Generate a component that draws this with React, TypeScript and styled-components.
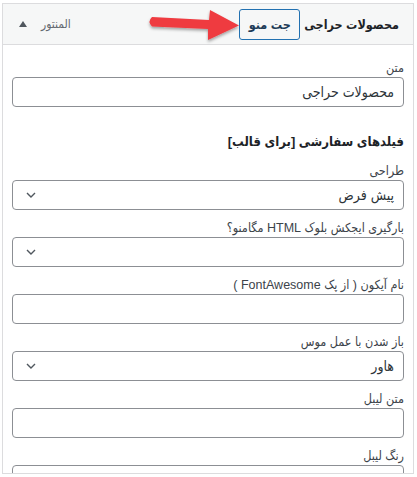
import styled, { createGlobalStyle } from 'styled-components'

const GlobalStyle = createGlobalStyle`
  html, body {
    margin: 0;
    padding: 0;
    background: #fff;
  }
  body {
    font-family: "Liberation Sans", "DejaVu Sans Condensed", "DejaVu Sans", sans-serif;
    color: #1d2327;
  }
`

const Page = styled.div`
  width: 417px;
  height: 477px;
  padding: 3px 3px 0 2px;
  box-sizing: border-box;
  overflow: hidden;
`

const Panel = styled.div`
  direction: rtl;
  border: 1px solid #dcdcde;
  background: #fff;
  height: 469px;
  overflow: hidden;
`

const Header = styled.div`
  position: relative;
  height: 40px;
  display: flex;
  align-items: center;
  justify-content: space-between;
  padding: 0 14px 0 16px;
  background: #f6f7f7;
  border-bottom: 1px solid #dcdcde;
`

const TitleGroup = styled.div`
  display: flex;
  align-items: center;
  gap: 4px;
`

const Title = styled.h2`
  margin: 0;
  font-size: 12.5px;
  font-weight: bold;
  color: #1d2327;
`

const MenuButton = styled.button`
  height: 31px;
  width: 61px;
  padding: 0;
  border: 1px solid #2271b1;
  border-radius: 3px;
  background: #f6f7f7;
  color: #1d3b57;
  font-family: inherit;
  font-size: 12.5px;
  font-weight: bold;
  direction: rtl;
`

const Toggle = styled.span`
  display: flex;
  align-items: center;
  gap: 14px;
  font-size: 12px;
  color: #646970;
`

const Caret = styled.span`
  width: 0;
  height: 0;
  border-left: 4px solid transparent;
  border-right: 4px solid transparent;
  border-bottom: 6px solid #50575e;
`

const Arrow = styled.svg`
  position: absolute;
  left: 139px;
  top: 3px;
  overflow: visible;
`

const Body = styled.div`
  padding: 13px 9px 0;
  display: flex;
  flex-direction: column;
`

const Field = styled.div`
  display: flex;
  flex-direction: column;
  margin-bottom: 8px;
`

const Label = styled.label`
  font-size: 12.5px;
  line-height: 17px;
  padding-top: 2px;
  color: #3c434a;
`

const Input = styled.div`
  height: 28px;
  border: 1px solid #8c8f94;
  border-radius: 4px;
  display: flex;
  align-items: center;
  padding: 0 9px;
  font-size: 14px;
  color: #2c3338;
  background: #fff;
`

const Select = styled(Input)`
  justify-content: space-between;
  padding: 0 9px 0 13px;
`

const Heading = styled.h3`
  margin: 17px 0 9px;
  font-size: 13px;
  line-height: 20px;
  font-weight: bold;
  color: #1d2327;
`

const Chevron = () => (
  <svg width="10" height="6" viewBox="0 0 10 6">
    <path d="M1 1l4 4 4-4" fill="none" stroke="#50575e" strokeWidth="1.4" />
  </svg>
)

const TextBox = ({ label, value }: { label: string; value?: string }) => (
  <Field>
    <Label>{label}</Label>
    <Input>{value}</Input>
  </Field>
)

const Dropdown = ({ label, value }: { label: string; value?: string }) => (
  <Field>
    <Label>{label}</Label>
    <Select>
      <span>{value}</span>
      <Chevron />
    </Select>
  </Field>
)

export default function App() {
  return (
    <Page>
      <GlobalStyle />
      <Panel>
        <Header>
          <TitleGroup>
            <Title>محصولات حراجی</Title>
            <MenuButton>جت منو</MenuButton>
          </TitleGroup>
          <Toggle>
            <span>المنتور</span>
            <Caret />
          </Toggle>
          <Arrow width="100" height="34" viewBox="0 0 100 34">
            <defs>
              <filter id="sh" x="-20%" y="-30%" width="140%" height="170%">
                <feDropShadow dx="0" dy="2" stdDeviation="1.6" floodColor="#000" floodOpacity="0.35" />
              </filter>
            </defs>
            <path
              d="M10 10 Q5 14.5 10 19.5 L66 22 L66 33 L97 18.5 L68 3 L67 13 Z"
              fill="#ef3b40"
              filter="url(#sh)"
            />
          </Arrow>
        </Header>
        <Body>
          <TextBox label="متن" value="محصولات حراجی" />
          <Heading>فیلدهای سفارشی [برای قالب]</Heading>
          <Dropdown label="طراحی" value="پیش فرض" />
          <Dropdown label="بارگیری ایجکش بلوک HTML مگامنو؟" />
          <TextBox label="نام آیکون ( از پک FontAwesome )" />
          <Dropdown label="باز شدن با عمل موس" value="هاور" />
          <TextBox label="متن لیبل" />
          <TextBox label="رنگ لیبل" />
        </Body>
      </Panel>
    </Page>
  )
}
